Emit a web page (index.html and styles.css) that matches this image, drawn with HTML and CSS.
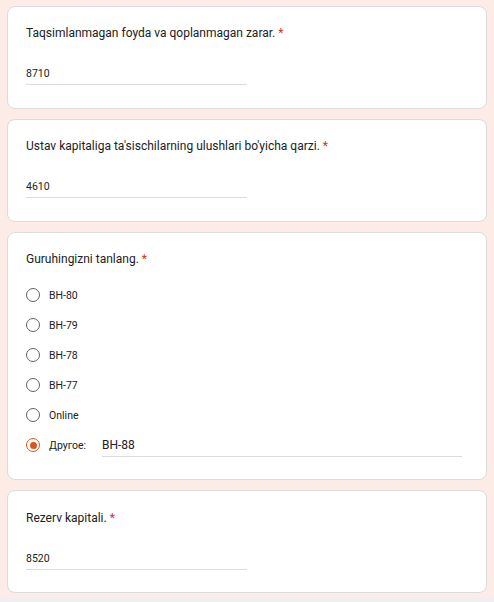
FILE: index.html
```html
<!DOCTYPE html>
<html>
<head>
  <title>Forma</title>
  <link rel="stylesheet" href="styles.css">
</head>
<body>

<div class="page">
  <div class="card">
    <div class="title">Taqsimlanmagan foyda va qoplanmagan zarar. <span class="req">*</span></div>
    <div class="field">8710</div>
  </div>

  <div class="card">
    <div class="title">Ustav kapitaliga ta'sischilarning ulushlari bo'yicha qarzi. <span class="req">*</span></div>
    <div class="field">4610</div>
  </div>

  <div class="card">
    <div class="title">Guruhingizni tanlang. <span class="req">*</span></div>
    <div class="options">
      <div class="option"><span class="radio"></span><span class="label">BH-80</span></div>
      <div class="option"><span class="radio"></span><span class="label">BH-79</span></div>
      <div class="option"><span class="radio"></span><span class="label">BH-78</span></div>
      <div class="option"><span class="radio"></span><span class="label">BH-77</span></div>
      <div class="option"><span class="radio"></span><span class="label">Online</span></div>
      <div class="option">
        <span class="radio checked"></span><span class="label other">Другое:</span>
        <div class="other-field">BH-88</div>
      </div>
    </div>
  </div>

  <div class="card last">
    <div class="title">Rezerv kapitali. <span class="req">*</span></div>
    <div class="field">8520</div>
  </div>
</div>

</body>
</html>
```

FILE: styles.css
```css
html {
  background: #f1f1f1;
}

body {
  margin: 0;
  font-family: Roboto, 'Noto Sans', sans-serif;
  color: #202124;
}

.page {
  background: #fdece6;
  padding: 6px 7px 5px 7px;
  display: flex;
  flex-direction: column;
  gap: 10px;
  border-bottom: 4px solid #efefef;
}

.card {
  background: #fff;
  border: 1px solid #dadce0;
  border-radius: 8px;
  padding: 17px 18px 23px 18px;
}

.card.last {
  padding-top: 18px;
  padding-bottom: 22px;
}

.title {
  font-size: 12px;
  line-height: 18px;
}

.req {
  color: #d93025;
}

.field {
  margin-top: 21px;
  width: 221px;
  height: 21px;
  border-bottom: 1px solid #dadce0;
  font-size: 10.5px;
  line-height: 21px;
}

.options {
  margin-top: 12px;
  margin-bottom: -4px;
}

.option {
  display: flex;
  align-items: center;
  height: 30px;
}

.radio {
  width: 12px;
  height: 12px;
  border: 1.5px solid #5f6368;
  border-radius: 50%;
  flex-shrink: 0;
  display: flex;
  align-items: center;
  justify-content: center;
}

.radio.checked {
  border-color: #d9571c;
}

.radio.checked::after {
  content: "";
  width: 7px;
  height: 7px;
  border-radius: 50%;
  background: #d9571c;
}

.label {
  margin-left: 9px;
  font-size: 10.5px;
}

.label.other {
  width: 53px;
  flex-shrink: 0;
}

.other-field {
  flex: 1;
  margin-right: 6px;
  height: 21px;
  margin-top: 1px;
  border-bottom: 1px solid #dadce0;
  font-size: 12px;
  line-height: 20px;
  color: #202124;
}
```
